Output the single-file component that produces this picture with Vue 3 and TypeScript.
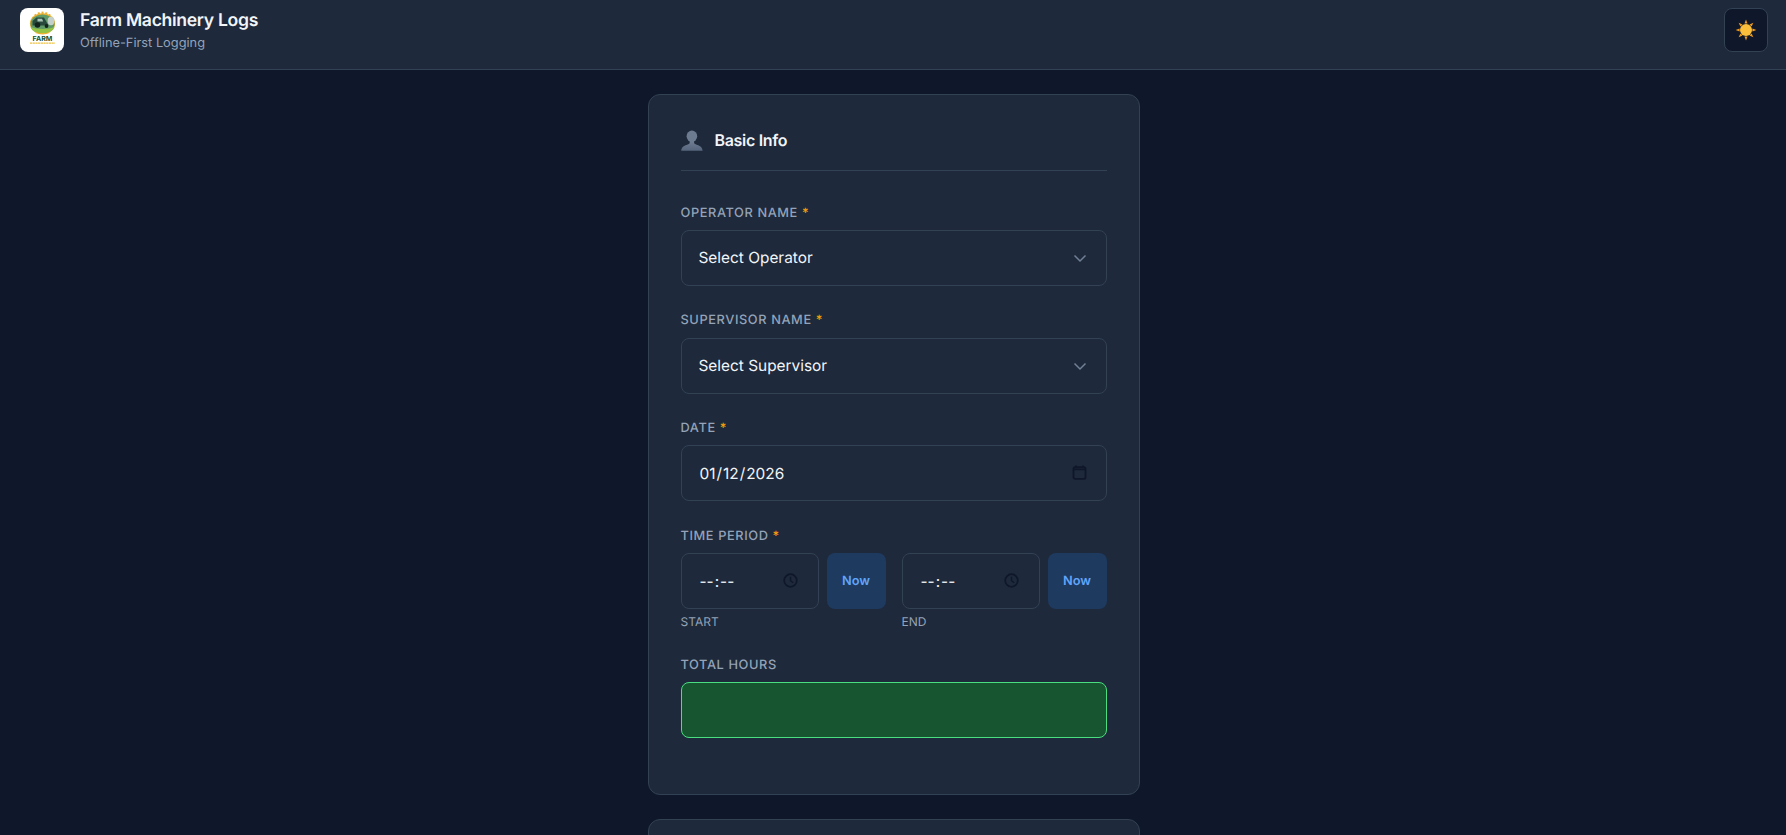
<script setup lang="ts">
import { ref } from 'vue'

const operator = ref('')
const supervisor = ref('')
const date = ref('2026-01-12')
const start = ref('')
const end = ref('')

const rays: number[] = [0, 45, 90, 135, 180, 225, 270, 315]
const gearTeeth: number[] = [-80, -60, -40, -20, 0, 20, 40, 60, 80]
</script>

<template>
  <div class="page">
    <header class="topbar">
      <div class="brand">
        <div class="logo">
          <svg width="44" height="44" viewBox="0 0 44 44" aria-hidden="true">
            <g fill="#eeb02e">
              <rect v-for="t in gearTeeth" :key="t" x="21.5" y="3.6" width="2" height="2.4" :transform="`rotate(${t} 22.5 15.5)`" />
            </g>
            <ellipse cx="22.5" cy="15.5" rx="12.6" ry="10.2" fill="#eeb02e" />
            <ellipse cx="22.5" cy="16" rx="12" ry="9.4" fill="#5f9a68" />
            <ellipse cx="31" cy="13" rx="3.4" ry="4.2" fill="#c4d0ca" />
            <path d="M12.5 13l4-3.500h7.500l2.500 4.500 2 3.500H12.500z" fill="#274a3d" />
            <path d="M17.500 10.800h4.500l1.200 2.700h-5.700z" fill="#a9c4b6" />
            <circle cx="17.500" cy="17" r="2.800" fill="#14241d" />
            <circle cx="26.500" cy="18" r="1.900" fill="#14241d" />
            <path d="M10.500 19c6 2.500 18 2.500 24 0-1.500 4.500-6.500 6.400-12 6.400S12 23.500 10.500 19z" fill="#93c244" />
            <path d="M15.500 24.500c4 1.400 10 1.400 14 0" fill="none" stroke="#eeb02e" stroke-width="1.3" />
            <text x="22.500" y="32.800" text-anchor="middle" class="logo-word">FARM</text>
            <path d="M10 35.200h25" stroke="#eec13f" stroke-width="1.3" stroke-dasharray="2.2 .5" />
          </svg>
        </div>
        <div class="brand-text">
          <h1>Farm Machinery Logs</h1>
          <p>Offline-First Logging</p>
        </div>
      </div>
      <button class="theme" type="button" aria-label="Toggle theme">
        <svg width="22" height="22" viewBox="0 0 22 22" aria-hidden="true">
          <g fill="#ee9a1c">
            <path v-for="r in rays" :key="r" d="M9.500 4.600 11 .6l1.500 4z" :transform="`rotate(${r} 11 11)`" />
          </g>
          <circle cx="11" cy="11" r="6" fill="#fbbf3c" />
        </svg>
      </button>
    </header>

    <main class="content">
      <section class="card">
        <div class="card-head">
          <svg class="person" width="22" height="22" viewBox="0 0 22 22" aria-hidden="true">
            <defs>
              <linearGradient id="bust" x1="0" y1="0" x2="0" y2="1">
                <stop offset="0" stop-color="#6f7d93" />
                <stop offset="1" stop-color="#56657c" />
              </linearGradient>
            </defs>
            <ellipse cx="10.900" cy="7.300" rx="5.300" ry="5.700" fill="#6d7b91" />
            <path d="M8.700 12v1.800c0 1-1.500 1.500-3.200 2.100C3 16.800.4 17.900.2 21.700h21.400c-.2-3.800-2.800-4.900-5.300-5.800-1.700-.6-3.200-1.100-3.200-2.100V12z" fill="url(#bust)" />
          </svg>
          <h2>Basic Info</h2>
        </div>

        <div class="field">
          <label class="label" for="op">Operator Name <span class="req">*</span></label>
          <div class="input-wrap">
            <select id="op" v-model="operator" class="control">
              <option value="">Select Operator</option>
            </select>
            <svg class="chev" width="14" height="14" viewBox="0 0 14 14" aria-hidden="true"><path d="M1.500 4.500 7 10l5.500-5.500" fill="none" stroke="#718096" stroke-width="1.500" /></svg>
          </div>
        </div>

        <div class="field">
          <label class="label" for="sup">Supervisor Name <span class="req">*</span></label>
          <div class="input-wrap">
            <select id="sup" v-model="supervisor" class="control">
              <option value="">Select Supervisor</option>
            </select>
            <svg class="chev" width="14" height="14" viewBox="0 0 14 14" aria-hidden="true"><path d="M1.500 4.500 7 10l5.500-5.500" fill="none" stroke="#718096" stroke-width="1.500" /></svg>
          </div>
        </div>

        <div class="field">
          <label class="label" for="dt">Date <span class="req">*</span></label>
          <div class="input-wrap">
            <input id="dt" v-model="date" type="date" class="control" />
            <svg class="picker cal" width="15" height="15" viewBox="0 0 15 15" aria-hidden="true">
              <path d="M4 .5v2.500M11 .5v2.500" stroke="#0f172a" stroke-width="1.700" />
              <rect x="1.500" y="2.200" width="12" height="11.600" rx="1.600" fill="none" stroke="#0f172a" stroke-width="1.800" />
              <path d="M1.500 4.300h12" stroke="#0f172a" stroke-width="1.800" />
            </svg>
          </div>
        </div>

        <div class="field">
          <span class="label">Time Period <span class="req">*</span></span>
          <div class="times">
            <div class="time-col">
              <div class="time-row">
                <div class="input-wrap grow">
                  <input v-model="start" type="time" class="control" aria-label="Start" />
                  <svg class="picker" width="15" height="15" viewBox="0 0 15 15" aria-hidden="true">
                    <circle cx="7.500" cy="7.500" r="6.300" fill="none" stroke="#0f172a" stroke-width="1.700" />
                    <path d="M7.500 3.800v3.900l2.700 2" fill="none" stroke="#0f172a" stroke-width="1.400" />
                  </svg>
                </div>
                <button class="now" type="button">Now</button>
              </div>
              <span class="sub">Start</span>
            </div>
            <div class="time-col">
              <div class="time-row">
                <div class="input-wrap grow">
                  <input v-model="end" type="time" class="control" aria-label="End" />
                  <svg class="picker" width="15" height="15" viewBox="0 0 15 15" aria-hidden="true">
                    <circle cx="7.500" cy="7.500" r="6.300" fill="none" stroke="#0f172a" stroke-width="1.700" />
                    <path d="M7.500 3.800v3.900l2.700 2" fill="none" stroke="#0f172a" stroke-width="1.400" />
                  </svg>
                </div>
                <button class="now" type="button">Now</button>
              </div>
              <span class="sub">End</span>
            </div>
          </div>
        </div>

        <div class="field last">
          <span class="label">Total Hours</span>
          <div class="total"></div>
        </div>
      </section>

      <section class="card next"></section>
    </main>
  </div>
</template>

<style>
html, body { margin: 0; background: #0f172a; overflow: hidden; height: 100%; }
</style>

<style scoped>
.page {
  min-height: 835px;
  background: #0f172a;
  font-family: Inter, "Liberation Sans", sans-serif;
  color: #f1f5f9;
  text-rendering: geometricPrecision;
}
.topbar {
  box-sizing: border-box;
  height: 70px;
  display: flex;
  align-items: flex-start;
  justify-content: space-between;
  padding: 8px 18px 0 20px;
  background: #1e293b;
  border-bottom: 1px solid #334155;
}
.brand { display: flex; gap: 16px; }
.logo {
  width: 44px; height: 44px; border-radius: 8px; background: #fff;
  display: flex; align-items: center; justify-content: center;
}
.logo-word { font: 700 7px Inter, sans-serif; fill: #14532d; }
.brand-text { padding-top: 2px; }
.brand-text h1 { margin: 0; font-size: 17.600px; line-height: 22px; font-weight: 600; letter-spacing: -.018em; color: #f1f5f9; }
.brand-text p { margin: 4px 0 0; font-size: 12.800px; line-height: 16px; color: #94a3b8; }
.theme {
  box-sizing: border-box; width: 44px; height: 44px; padding: 0;
  display: flex; align-items: center; justify-content: center;
  border-radius: 8px; border: 1px solid #334155; background: #0f172a;
}
.content {
  display: flex; flex-direction: column; align-items: center; gap: 24px;
  padding: 24px 0 0 1px;
}
.card {
  box-sizing: border-box; width: 492px; padding: 32px;
  background: #1e293b; border: 1px solid #334155; border-radius: 12px;
}
.next { height: 300px; }
.card-head {
  box-sizing: border-box;
  display: flex; align-items: center; gap: 12px;
  height: 44px; padding-bottom: 17px; margin-bottom: 31.300px;
  border-bottom: 1px solid #334155;
}
.person { flex: none; }
.card-head h2 { margin: 0; font-size: 16px; line-height: 26px; font-weight: 600; letter-spacing: -.02em; color: #f1f5f9; }
.field { margin-bottom: 24px; display: flex; flex-direction: column; }
.field.last { margin-bottom: 23.800px; }
.label {
  font-size: 12.800px; line-height: 20.300px; padding-top: 1.500px; margin-bottom: 5.900px;
  letter-spacing: .6px; text-transform: uppercase; color: #94a3b8; font-weight: 500;
}
.req { color: #f59e0b; }
.control {
  box-sizing: border-box; display: block; width: 100%; height: 56px; padding: 0 16px 0 17px;
  background: #1e293b; border: 1px solid #334155; border-radius: 8px;
  color: #f1f5f9; font: 15.400px Inter, sans-serif; outline: none;
  text-rendering: geometricPrecision;
  appearance: none; -webkit-appearance: none;
}
input.control { appearance: auto; -webkit-appearance: auto; }
input.control::-webkit-calendar-picker-indicator { opacity: 0; }
input.control::-webkit-datetime-edit-ampm-field { display: none; }
.input-wrap { position: relative; }
.grow { flex: 1; min-width: 0; }
.chev { position: absolute; right: 20px; top: 21px; pointer-events: none; }
.picker { position: absolute; right: 21px; top: 20px; pointer-events: none; }
.cal { right: 20px; }
.times { display: grid; grid-template-columns: 1fr 1fr; gap: 16px; }
.time-col { display: flex; flex-direction: column; min-width: 0; }
.time-row { display: flex; gap: 8px; }
.now {
  flex: none; width: 59px; height: 56px; border: 0; border-radius: 8px;
  background: #1e3a5f; color: #60a5fa; font: 600 12.800px Inter, sans-serif;
  text-rendering: geometricPrecision;
}
.sub { margin-top: 5px; font-size: 12px; line-height: 16.400px; color: #94a3b8; text-transform: uppercase; }
.total {
  box-sizing: border-box; height: 56px; border-radius: 8px;
  background: #165530; border: 1px solid #4ade80;
}
</style>
